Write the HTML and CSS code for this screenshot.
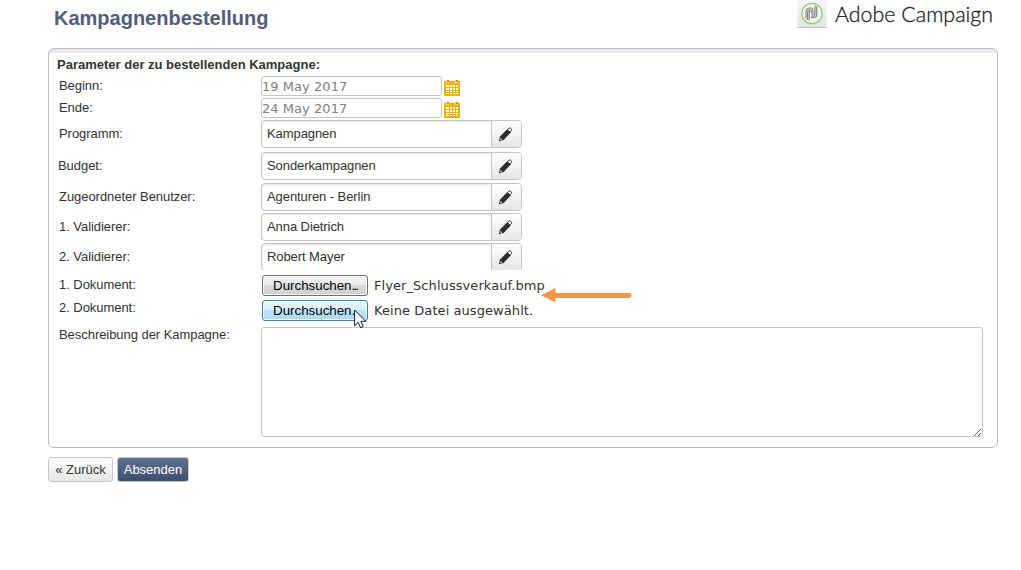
FILE: index.html
```html
<!DOCTYPE html>
<html lang="de">
<head>
<meta charset="utf-8">
<title>Kampagnenbestellung</title>
<link rel="stylesheet" href="styles.css">
</head>
<body>
<svg class="defs" width="0" height="0" aria-hidden="true">
  <symbol id="pencil" viewBox="0 0 16 16">
    <path d="M.8 15.2 2.2 10.2 10 2 13.9 5.5 6 13.8Z" fill="#2d2d2d"/>
    <path d="M2.7 11.8 4.5 13.3 2.5 14Z" fill="#eee"/>
    <path d="M10.4 2.5 11.8 1.1Q12.6.6 13.5 1.3L14.2 2Q15 2.9 14.3 3.8L13.1 5" fill="#f5f5f5" stroke="#2d2d2d" stroke-width="1"/>
  </symbol>
  <symbol id="calendar" viewBox="0 0 16 16">
    <path d="M0 1H16V16H0Z" fill="#eab500"/>
    <path d="M2 0H5V3H2ZM11 0H14V3H11Z" fill="#f8d9a0"/>
    <path d="M3 0H5V2H3ZM12 0H14V2H12Z" fill="#e8852a"/>
    <path d="M2 5h3v2H2zM6 5h2v2H6zM9 5h2v2H9zM12 5h2v2H12zM2 8h3v2H2zM6 8h2v2H6zM9 8h2v2H9zM12 8h2v2H12zM2 11h3v1H2zM6 11h2v1H6zM9 11h2v1H9zM12 11h2v1H12zM2 13h3v1H2zM6 13h2v1H6zM9 13h2v1H9zM12 13h2v1H12z" fill="#fffbe8"/>
  </symbol>
</svg>
<header class="header">
  <h1 class="title">Kampagnenbestellung</h1>
  <div class="brand">
    <svg class="brand-icon" width="30" height="29" viewBox="0 0 30 29">
      <defs><linearGradient id="tile" x2="0" y2="1"><stop stop-color="#f6f6f6"/><stop offset="1" stop-color="#e2e2e2"/></linearGradient></defs>
      <path d="M.5 0H29.5V28H.5Z" fill="url(#tile)"/>
      <path d="M0 27.5H30" stroke="#c6c6c6"/>
      <circle cx="15" cy="13.5" r="10.2" fill="#f4f6f2" stroke="#8fd06c" stroke-width="1.2"/>
      <g fill="none" stroke="#777e7c" stroke-width="1.1">
        <path d="M9 18.5V12.5Q9 8 13 8H14.2Q16 8 16 10V14.6H14.6"/>
        <path d="M10.6 20V12.8Q10.6 9.7 13 9.7Q14.4 9.7 14.4 11V13"/>
        <path d="M12.2 20.5V13.2Q12.2 11.4 13.2 11.4"/>
        <path d="M18 5.5V14.5Q18 16.2 16.4 16.2H14.2"/>
        <path d="M19.7 6.5V15Q19.4 17.8 16.4 17.8H14.2"/>
      </g>
    </svg>
    <svg class="brand-name" width="160" height="32" viewBox="0 0 160 32"><text class="brand-text" x="0" y="22" textLength="158" lengthAdjust="spacingAndGlyphs">Adobe Campaign</text></svg>
  </div>
</header>
<main class="panel">
  <h2 class="section-title">Parameter der zu bestellenden Kampagne:</h2>
  <div class="form">
    <label class="label">Beginn:</label>
    <div class="field"><div class="date">19 May 2017</div><svg class="calendar"><use href="#calendar"/></svg></div>
    <label class="label">Ende:</label>
    <div class="field"><div class="date">24 May 2017</div><svg class="calendar"><use href="#calendar"/></svg></div>
    <label class="label label-mid">Programm:</label>
    <div class="picker"><span class="value">Kampagnen</span><span class="edit"><svg class="pencil"><use href="#pencil"/></svg></span></div>
    <label class="label label-mid label-budget">Budget:</label>
    <div class="picker"><span class="value">Sonderkampagnen</span><span class="edit"><svg class="pencil"><use href="#pencil"/></svg></span></div>
    <label class="label label-mid">Zugeordneter Benutzer:</label>
    <div class="picker"><span class="value">Agenturen - Berlin</span><span class="edit"><svg class="pencil"><use href="#pencil"/></svg></span></div>
    <label class="label label-mid">1. Validierer:</label>
    <div class="picker"><span class="value">Anna Dietrich</span><span class="edit"><svg class="pencil"><use href="#pencil"/></svg></span></div>
    <label class="label label-mid">2. Validierer:</label>
    <div class="clip"><div class="picker"><span class="value">Robert Mayer</span><span class="edit"><svg class="pencil"><use href="#pencil"/></svg></span></div></div>
    <label class="label">1. Dokument:</label>
    <div class="upload">
      <span class="browse">Durchsuchen<span class="dots">...</span></span><span class="filename">Flyer_Schlussverkauf.bmp</span>
      <svg class="arrow" width="91" height="15" viewBox="0 0 91 15"><path d="M0 7.2 14.5 0V5H88Q90.5 5 90.5 7.5T88 10H14.5V14.6Z" fill="#f79646"/></svg>
    </div>
    <label class="label label-high">2. Dokument:</label>
    <div class="upload">
      <span class="browse browse-hover">Durchsuchen<span class="dots">...</span></span><span class="filename">Keine Datei ausgewählt.</span>
      <svg class="cursor" width="13" height="20" viewBox="0 0 13 20"><path d="M.6 1V16.8L4.2 13.4 6.6 18.8 9.2 17.7 6.9 12.3H11.8Z" fill="#fff" stroke="#111b2d"/></svg>
    </div>
    <label class="label label-high">Beschreibung der Kampagne:</label>
    <div class="textarea"><svg class="grip" width="9" height="9" viewBox="0 0 9 9"><path d="M1 8h1v1H1zM2 7h1v1H2zM3 6h1v1H3zM4 5h1v1H4zM5 4h1v1H5zM6 3h1v1H6zM7 2h1v1H7zM5 8h1v1H5zM6 7h1v1H6zM7 6h1v1H7z" fill="#555"/></svg></div>
  </div>
</main>
<footer class="actions">
  <span class="button">« Zurück</span>
  <span class="button button-primary">Absenden</span>
</footer>
</body>
</html>
```

FILE: styles.css
```css
* { box-sizing: border-box; }
body {
  margin: 0;
  height: 570px;
  overflow: hidden;
  background: #fff;
  color: #333;
  font: 13px/16px "Liberation Sans", Arial, sans-serif;
}
svg { display: block; flex: none; }
.defs { position: absolute; }
.header {
  display: flex;
  justify-content: space-between;
  height: 48px;
  padding: 0 26px 0 54px;
}
.title {
  margin: 6px 0 0;
  font-size: 20px;
  line-height: 24px;
  color: #4f5e79;
}
.brand { display: flex; gap: 8px; }
.brand-text {
  font: 300 22px Lato, sans-serif;
  fill: #222;
  stroke: #222;
  stroke-width: .3px;
}
.panel {
  width: 950px;
  height: 400px;
  margin-left: 48px;
  padding: 4px 14px 10px 8px;
  border: 1px solid #bcbcbc;
  border-radius: 6px;
  background: linear-gradient(#e8ebf1 4px, #fff 4px);
}
.section-title {
  margin: 0;
  height: 23px;
  font-size: 13px;
  line-height: 23px;
}
.form {
  display: grid;
  grid-template-columns: 204px 722px;
  grid-template-rows: 22px 22px 32px 31px 30px 30px 32px 25px 27px 110px;
  align-items: start;
}
.label { padding: 2px 0 0 2px; white-space: nowrap; letter-spacing: -.05px; }
.label-mid { padding-top: 6px; }
.label-high { padding-top: 0; }
.label-budget { padding-left: 1px; }
.field { display: flex; gap: 2px; }
.date {
  width: 181px;
  height: 20px;
  padding-left: 0;
  border: 1px solid #c6c6c6;
  border-radius: 3px;
  color: #808080;
  font: 13px/19px "DejaVu Sans", sans-serif;
  letter-spacing: .05px;
}
.calendar { width: 16px; height: 16px; margin-top: 4px; }
.picker {
  display: flex;
  width: 261px;
  height: 28px;
  border: 1px solid #c4c4c4;
  border-radius: 4px;
  box-shadow: inset 0 1px 2px #e4e4e4;
  overflow: hidden;
}
.value { flex: 1; padding-left: 5px; line-height: 25px; letter-spacing: -.08px; }
.edit {
  display: flex;
  align-items: center;
  width: 30px;
  padding-left: 6px;
  border-left: 1px solid #c4c4c4;
  background: linear-gradient(#fff, #e6e6e6);
}
.pencil { width: 15px; height: 15px; }
.clip { height: 27px; overflow: hidden; }
.upload { position: relative; display: flex; padding-left: 1px; }
.browse {
  width: 106px;
  height: 21px;
  padding-left: 10px;
  border: 1px solid #707070;
  border-radius: 3px;
  background: linear-gradient(#f2f2f2, #ebebeb 49%, #dcdcdc 50%, #cfcfcf);
  box-shadow: inset 0 0 0 1px #f8f8f8;
  color: #000;
  font-size: 13.33px;
  line-height: 20px;
  white-space: nowrap;
}
.browse-hover {
  border-color: #3c7fb1;
  background: linear-gradient(#eaf6fd, #d9f0fc 49%, #bee6fd 50%, #a7d9f5);
}
.dots { letter-spacing: -1.9px; }
.filename {
  padding-left: 6px;
  font: 13px/21px "DejaVu Sans", sans-serif;
  letter-spacing: .07px;
}
.arrow { position: absolute; left: 280px; top: 13px; }
.cursor { position: absolute; left: 93px; top: 9px; }
.textarea {
  display: flex;
  align-items: flex-end;
  justify-content: flex-end;
  height: 110px;
  border: 1px solid #c6c6c6;
  border-radius: 3px;
}
.actions { display: flex; gap: 4px; margin: 9px 0 0 48px; }
.button {
  width: 65px;
  height: 25px;
  border: 1px solid #c6c6c6;
  border-radius: 3px;
  background: linear-gradient(#fff, #e6e6e6);
  line-height: 23px;
  text-align: center;
}
.button-primary {
  width: 72px;
  background: linear-gradient(#61718f, #3c4e6e);
  color: #fff;
}
```
